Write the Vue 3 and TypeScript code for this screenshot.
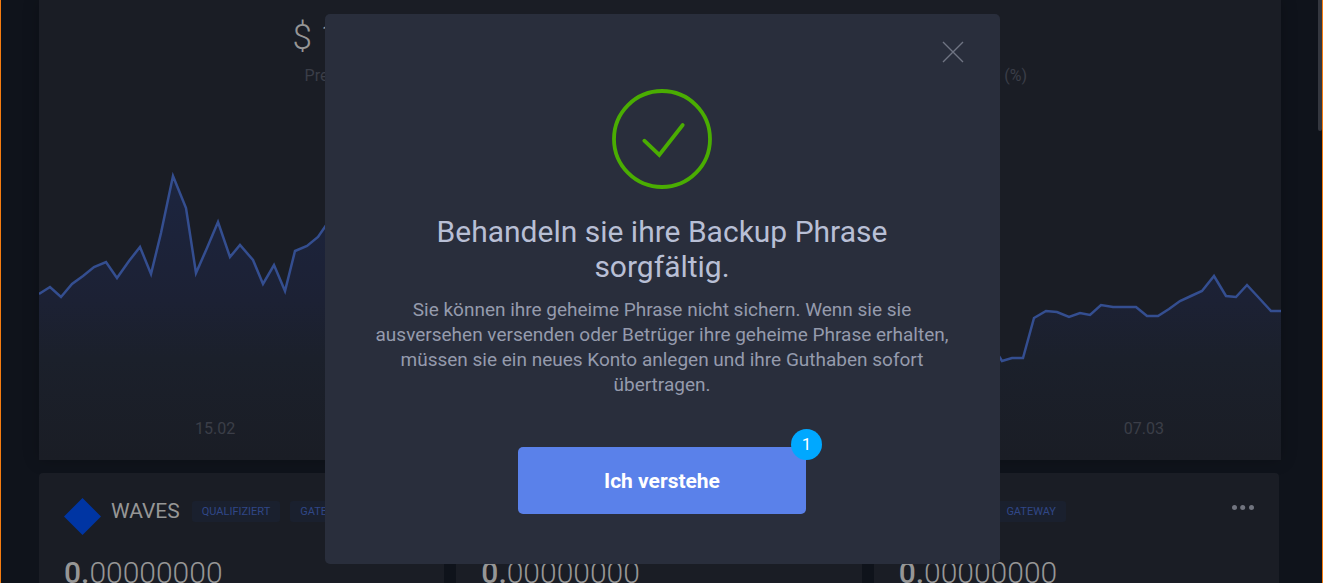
<script setup lang="ts">
import { ref } from 'vue'

interface Asset {
  name: string
  tags: string[]
  color: string
}

const assets: Asset[] = [
  { name: 'WAVES', tags: ['QUALIFIZIERT', 'GATEWAY'], color: '#0035a3' },
  { name: 'BTC', tags: ['GATEWAY'], color: '#8a5a16' },
  { name: 'BTC', tags: ['GATEWAY'], color: '#8a5a16' },
]

const dates: string[] = ['15.02', '07.03']
const open = ref(true)

const points: [number, number][] = [
  [0, 124], [11, 117], [22, 127], [33, 114], [44, 106], [55, 97], [67, 92], [78, 108],
  [90, 91], [101, 77], [112, 104], [122, 63], [134, 6], [147, 38], [157, 103], [168, 78],
  [179, 52], [191, 87], [201, 75], [214, 90], [224, 114], [235, 95], [246, 121], [256, 81],
  [268, 76], [279, 67], [290, 51], [420, 90], [560, 120], [700, 150], [840, 170], [951, 172],
  [963, 191], [973, 188], [984, 188], [995, 148], [1007, 141], [1018, 142], [1030, 147],
  [1041, 143], [1051, 145], [1062, 135], [1074, 137], [1097, 137], [1108, 146], [1119, 146],
  [1130, 139], [1141, 131], [1152, 126], [1163, 121], [1175, 106], [1187, 126], [1197, 127],
  [1208, 115], [1220, 128], [1232, 141], [1242, 141],
]
const linePoints = points.map((p) => p.join(',')).join(' ')
const areaPoints = `0,290 ${linePoints} 1242,290`
</script>

<template>
  <div class="app">
    <main class="page">
      <section class="hero">
        <div class="stats">
          <div class="stat">
            <strong class="value">$ 1.067</strong>
            <span class="caption">Preise (USD)</span>
          </div>
          <div class="stat">
            <strong class="value">2.5</strong>
            <span class="caption">Änderungen (%)</span>
          </div>
        </div>
        <div class="chart">
          <svg class="plot" viewBox="0 0 1242 290" preserveAspectRatio="none" aria-hidden="true">
            <defs>
              <linearGradient id="area" gradientUnits="userSpaceOnUse" x1="0" y1="0" x2="0" y2="290">
                <stop offset="0" stop-color="#1c2540" />
                <stop offset="0.45" stop-color="#1c2134" />
                <stop offset="0.65" stop-color="#1b202b" />
                <stop offset="1" stop-color="#1a1d25" />
              </linearGradient>
            </defs>
            <polygon :points="areaPoints" fill="url(#area)" />
            <polyline
              :points="linePoints"
              fill="none"
              stroke="#344e90"
              stroke-width="2.5"
              vector-effect="non-scaling-stroke"
            />
          </svg>
          <div class="dates">
            <span v-for="date in dates" :key="date">{{ date }}</span>
          </div>
        </div>
      </section>

      <section class="cards">
        <article v-for="(asset, i) in assets" :key="i" class="card">
          <header class="card-head">
            <svg class="coin" viewBox="0 0 37 37" aria-hidden="true">
              <path d="M18.5 0 37 18.5 18.5 37 0 18.5Z" :fill="asset.color" />
            </svg>
            <h2 class="name">{{ asset.name }}</h2>
            <span v-for="tag in asset.tags" :key="tag" class="tag">{{ tag }}</span>
            <button v-if="i === 2" class="more" type="button" aria-label="Mehr">
              <svg viewBox="0 0 22 5" width="22" height="5" aria-hidden="true">
                <circle cx="2.5" cy="2.5" r="2.5" />
                <circle cx="10.7" cy="2.5" r="2.5" />
                <circle cx="19.5" cy="2.5" r="2.5" />
              </svg>
            </button>
          </header>
          <p class="amount"><b>0.</b>00000000</p>
        </article>
      </section>
    </main>

    <div class="scroll-thumb"></div>

    <div v-if="open" class="overlay">
      <div class="modal" role="dialog" aria-modal="true" aria-labelledby="modal-title">
        <button class="close" type="button" aria-label="Schließen" @click="open = false">
          <svg viewBox="0 0 22 22" width="22" height="22" aria-hidden="true">
            <path d="M1 1 21 21M21 1 1 21" />
          </svg>
        </button>
        <svg class="check" viewBox="0 0 100 100" aria-hidden="true">
          <circle cx="50" cy="50" r="48" />
          <path d="M32.300 51.700 47.300 66 70.700 36" />
        </svg>
        <h1 id="modal-title" class="title">Behandeln sie ihre Backup Phrase sorgfältig.</h1>
        <p class="text">
          Sie können ihre geheime Phrase nicht sichern. Wenn sie sie ausversehen versenden oder
          Betrüger ihre geheime Phrase erhalten, müssen sie ein neues Konto anlegen und ihre
          Guthaben sofort übertragen.
        </p>
        <button class="confirm" type="button" @click="open = false">
          Ich verstehe
          <span class="badge">1</span>
        </button>
      </div>
    </div>
  </div>
</template>

<style>
body {
  background: #0f131b;
}
</style>

<style scoped>
.app {
  position: relative;
  box-sizing: border-box;
  height: 100vh;
  overflow: hidden;
  border: solid #f57c11;
  border-width: 0 1px;
  background: #0f131b;
  font-family: Roboto, 'Liberation Sans', sans-serif;
}
.page {
  padding: 0 41px 0 38px;
}
.hero {
  background: #1a1d25;
  box-shadow: 0 0 16px rgba(0, 0, 0, 0.2);
}
.stats {
  display: grid;
  grid-template-columns: 1fr 1fr;
  height: 170px;
}
.stat {
  display: flex;
  flex-direction: column;
  align-items: center;
  padding-top: 16px;
}
.value {
  color: #969696;
  font-size: 35px;
  font-weight: 300;
  line-height: 44px;
}
.caption {
  margin-top: 6px;
  color: #3b3e48;
  font-size: 16px;
  line-height: 20px;
}
.chart {
  display: grid;
}
.plot,
.dates {
  grid-area: 1 / 1;
}
.plot {
  display: block;
  width: 100%;
  height: 290px;
}
.dates {
  display: flex;
  align-self: end;
  justify-content: space-between;
  padding: 0 117px 21px 156px;
  color: #3b3e48;
  font-size: 16px;
  line-height: 20px;
}
.cards {
  display: grid;
  grid-template-columns: repeat(3, 1fr);
  gap: 12px;
  margin-top: 13px;
  padding-right: 2px;
}
.card {
  height: 200px;
  border-radius: 4px;
  padding: 25px;
  box-sizing: border-box;
  background: #1a1d25;
}
.card-head {
  display: flex;
  align-items: flex-start;
}
.coin {
  width: 37px;
  height: 37px;
}
.name {
  margin: 0 12px 0 10px;
  color: #969696;
  font-size: 21px;
  font-weight: 400;
  line-height: 26px;
}
.tag {
  margin: 3px 10px 0 0;
  padding: 0 10px;
  border-radius: 3px;
  background: #1a202e;
  color: #304787;
  font-size: 11px;
  line-height: 21px;
}
.more {
  display: flex;
  margin: 7px 0 0 auto;
  padding: 0;
  border: 0;
  background: none;
}
.more svg {
  fill: #71747f;
}
.amount {
  margin: 20px 0 0;
  color: #969696;
  font-size: 30px;
  font-weight: 300;
  line-height: 36px;
}
.amount b {
  font-weight: 500;
}
.scroll-thumb {
  position: absolute;
  top: 0;
  right: 0;
  width: 4px;
  height: 131px;
  border-radius: 0 0 3px 3px;
  background: #34373f;
}
.overlay {
  position: absolute;
  inset: 0;
  display: flex;
  align-items: flex-start;
  justify-content: center;
  padding: 14px 0 0 2px;
}
.modal {
  position: relative;
  display: flex;
  flex-direction: column;
  align-items: center;
  box-sizing: border-box;
  width: 675px;
  padding: 75px 51px 50px 50px;
  border-radius: 5px;
  background: #292e3c;
  text-align: center;
}
.close {
  position: absolute;
  top: 27px;
  right: 36px;
  display: flex;
  padding: 0;
  border: 0;
  background: none;
}
.close path {
  stroke: #6f7483;
  stroke-width: 1.4;
}
.check {
  width: 100px;
  height: 100px;
  fill: none;
  stroke: #4aad02;
  stroke-width: 3.8;
  stroke-linecap: round;
}
.title {
  margin: 25px 0 0;
  color: #b8bfd5;
  font-size: 30px;
  font-weight: 400;
  line-height: 35px;
}
.text {
  margin: 13px 0 0;
  color: #959bad;
  font-size: 19px;
  line-height: 25px;
}
.confirm {
  position: relative;
  width: 288px;
  height: 67px;
  margin-top: 50px;
  border: 0;
  border-radius: 5px;
  background: #5a81ea;
  color: #fff;
  font: 700 21px Roboto, 'Liberation Sans', sans-serif;
}
.badge {
  position: absolute;
  top: -18px;
  right: -16px;
  width: 31px;
  height: 31px;
  border-radius: 50%;
  background: #00a8ff;
  font-size: 17px;
  font-weight: 400;
  line-height: 31px;
}
</style>
